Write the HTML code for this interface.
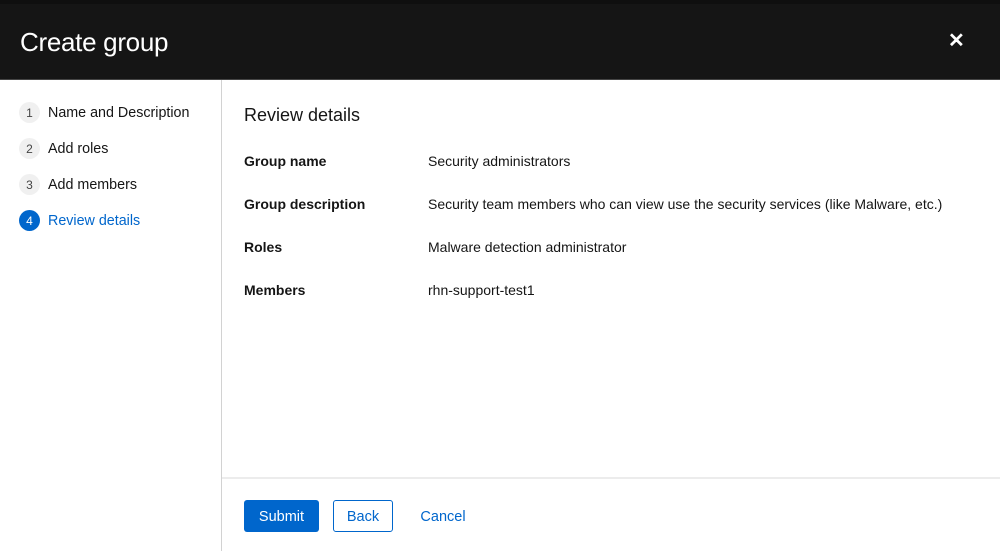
<!DOCTYPE html><html><head><style>
body{margin:0;width:1000px;height:551px;overflow:hidden;background:#fff;font-family:"Liberation Sans",sans-serif;color:#151515;position:relative}
.top{position:absolute;left:0;top:0;width:1000px;height:4px;background:#0f0f0f}
.hdr{position:absolute;left:0;top:4px;width:1000px;height:75px;background:#151515;border-bottom:1px solid #444}
.hdr h1{position:absolute;left:20px;top:23px;margin:0;font-size:26px;font-weight:normal;color:#fff;letter-spacing:-0.3px}
.x{position:absolute;left:948px;top:24px;color:#fff;font-size:20px;font-weight:bold}
.side{position:absolute;left:0;top:80px;width:221px;height:471px;border-right:1px solid #d2d2d2}
.step{position:absolute;left:19px;font-size:14.3px;display:flex;align-items:center}
.num{width:21px;height:21px;border-radius:50%;background:#f0f0f0;color:#444;font-size:12px;display:flex;align-items:center;justify-content:center;margin-right:8px}
.act .num{background:#0066cc;color:#fff}
.act{color:#0066cc}
h2{position:absolute;left:244px;top:105px;margin:0;font-size:18px;font-weight:normal}
.row{position:absolute;left:244px;font-size:14px}
.row b{display:inline-block;width:184px}
.foot{position:absolute;left:222px;top:477px;width:778px;border-top:2px solid #ececec;height:72px}
.btn{position:absolute;top:500px;height:32px;box-sizing:border-box;font-size:14.5px;display:flex;align-items:center;justify-content:center;border-radius:3px;padding-top:2px}
</style></head><body>
<div class="top"></div>
<div class="hdr"><h1>Create group</h1><div class="x">✕</div></div>
<div class="side">
<div class="step" style="top:22px"><span class="num">1</span>Name and Description</div>
<div class="step" style="top:58px"><span class="num">2</span>Add roles</div>
<div class="step" style="top:94px"><span class="num">3</span>Add members</div>
<div class="step act" style="top:130px"><span class="num">4</span>Review details</div>
</div>
<h2>Review details</h2>
<div class="row" style="top:153px"><b>Group name</b>Security administrators</div>
<div class="row" style="top:196px"><b>Group description</b>Security team members who can view use the security services (like Malware, etc.)</div>
<div class="row" style="top:239px"><b>Roles</b>Malware detection administrator</div>
<div class="row" style="top:282px"><b>Members</b>rhn-support-test1</div>
<div class="foot"></div>
<div class="btn" style="left:244px;width:75px;background:#0066cc;color:#fff">Submit</div>
<div class="btn" style="left:333px;width:60px;border:1px solid #0066cc;color:#0066cc">Back</div>
<div class="btn" style="left:410px;width:66px;color:#0066cc">Cancel</div>
</body></html>
